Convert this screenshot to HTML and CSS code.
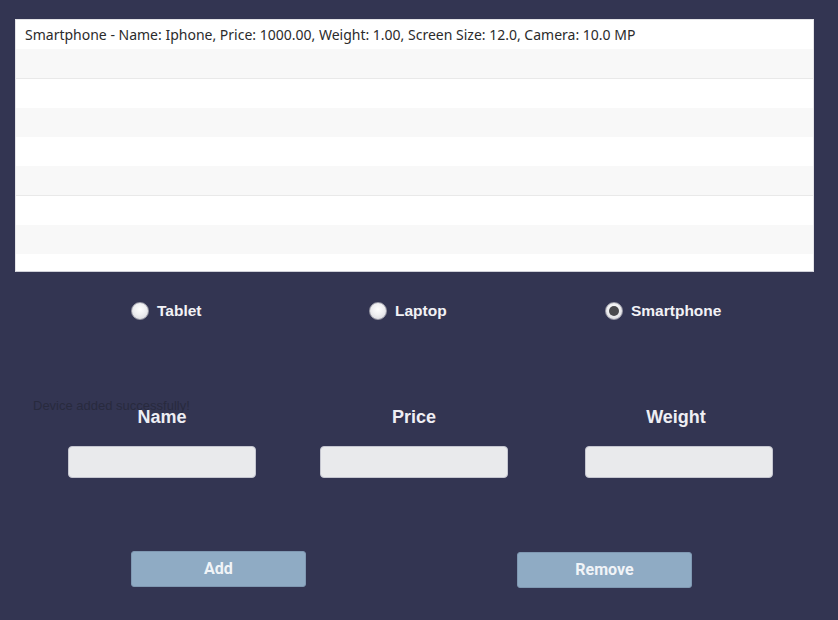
FILE: index.html
```html
<!DOCTYPE html>
<html>
<head>
<meta charset="utf-8">
<link rel="stylesheet" href="styles.css">
</head>
<body>
<div class="app">
  <div class="list">
    <div class="row">Smartphone - Name: Iphone, Price: 1000.00, Weight: 1.00, Screen Size: 12.0, Camera: 10.0 MP</div>
    <div class="row alt line"></div>
    <div class="row"></div>
    <div class="row alt"></div>
    <div class="row"></div>
    <div class="row alt line"></div>
    <div class="row"></div>
    <div class="row alt"></div>
    <div class="row short"></div>
  </div>

  <div class="radios">
    <label class="radio"><span class="dot"></span>Tablet</label>
    <label class="radio"><span class="dot"></span>Laptop</label>
    <label class="radio"><span class="dot on"></span>Smartphone</label>
  </div>

  <div class="form">
    <div class="status">Device added successfully!</div>
    <div class="field"><div class="lbl">Name</div><div class="input"></div></div>
    <div class="field"><div class="lbl">Price</div><div class="input"></div></div>
    <div class="field"><div class="lbl lw">Weight</div><div class="input"></div></div>
  </div>

  <div class="buttons">
    <div class="btn add">Add</div>
    <div class="btn remove">Remove</div>
  </div>
</div>
</body>
</html>
```

FILE: styles.css
```css
html, body {
  margin: 0;
  padding: 0;
  background: #333552;
  width: 838px;
  height: 620px;
  overflow: hidden;
}
.app {
  padding: 19px 25px 0 15px;
  font-family: "Liberation Sans", Arial, sans-serif;
}
.list {
  width: 797px;
  height: 251px;
  background: #ffffff;
  border: 1px solid #e4e4e8;
  border-bottom-color: #cfd0d8;
  overflow: hidden;
}
.row {
  height: 29px;
  box-sizing: border-box;
  padding-left: 9px;
  font-family: "Noto Sans", "Open Sans", sans-serif;
  font-size: 14px;
  line-height: 29px;
  color: #2b2b2b;
  white-space: nowrap;
}
.row.alt { background: #f8f8f8; }
.row.line { height: 30px; border-bottom: 1px solid #e9e9e9; }
.row.short { height: 19px; }

.radios {
  display: grid;
  grid-template-columns: 238px 236px auto;
  padding-left: 116px;
  margin-top: 29px;
  height: 20px;
}
.radio {
  display: flex;
  align-items: center;
  font-weight: bold;
  font-size: 15.5px;
  color: #f2f2f6;
}
.dot {
  width: 18px;
  height: 18px;
  border-radius: 50%;
  box-sizing: border-box;
  border: 1px solid #9a9aa6;
  background: radial-gradient(circle at 50% 40%, #ffffff 0%, #f0f0f2 45%, #d4d4da 100%);
  margin-right: 8px;
  position: relative;
}
.dot.on::after {
  content: "";
  position: absolute;
  left: 3px;
  top: 3px;
  width: 10px;
  height: 10px;
  border-radius: 50%;
  background: #4a4a4e;
}

.form {
  position: relative;
  display: grid;
  grid-template-columns: 252px 265px 188px;
  padding-left: 53px;
  margin-top: 86px;
}
.status {
  position: absolute;
  left: 18px;
  top: -9px;
  font-size: 13px;
  color: #282a3e;
}
.field {
  display: flex;
  flex-direction: column;
  align-items: center;
  width: 188px;
}
.lbl {
  font-weight: bold;
  font-size: 18px;
  line-height: 21px;
  color: #eeeef4;
}
.lbl.lw { margin-left: -6px; }
.input {
  margin-top: 18px;
  width: 188px;
  height: 32px;
  box-sizing: border-box;
  background: #e9eaec;
  border: 1px solid #c4c5cf;
  border-radius: 4px;
}

.buttons {
  display: flex;
  align-items: flex-start;
  padding-left: 116px;
  margin-top: 73px;
  gap: 211px;
}
.btn {
  width: 175px;
  height: 36px;
  box-sizing: border-box;
  padding-bottom: 2px;
  background: #8fabc4;
  border: 1px solid #7f98b2;
  border-radius: 3px;
  color: #f1f4f8;
  font-family: Roboto, "Liberation Sans", sans-serif;
  font-weight: bold;
  font-size: 16px;
  display: flex;
  align-items: center;
  justify-content: center;
}
.btn.remove { margin-top: 1px; }
```
